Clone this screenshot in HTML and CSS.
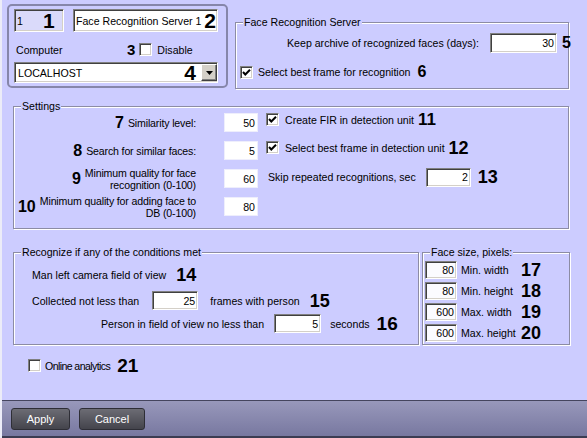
FILE: index.html
```html
<!DOCTYPE html>
<html>
<head>
<meta charset="utf-8">
<link rel="stylesheet" href="styles.css">
</head>
<body>
<div class="window">
  <div class="content">
    <div class="top">
      <div class="idpanel">
        <div class="idrow">
          <div class="field sunken f-id"><span>1</span><b class="num n21 id-num">1</b></div>
          <div class="field sunken f-name"><span>Face Recognition Server 1</span><b class="num n21">2</b></div>
        </div>
        <div class="comprow">
          <span class="comp">Computer</span>
          <span class="disable"><b class="num n15">3</b><span class="cb"></span><span>Disable</span></span>
        </div>
        <div class="combo sunken">
          <span>LOCALHOST</span>
          <b class="num n21 combo-num">4</b>
          <span class="drop"><svg width="7" height="4" viewBox="0 0 7 4"><path d="M0 0H7L3.5 4Z" fill="#000"/></svg></span>
        </div>
      </div>
      <div class="group g-server">
        <span class="legend">Face Recognition Server</span>
        <div class="keeprow">
          <span>Keep archive of recognized faces (days):</span>
          <div class="field sunken f-30">30</div>
          <b class="num n16 over">5</b>
        </div>
        <div class="cbrow">
          <span class="cb checked"><svg viewBox="0 0 11 11"><polyline points="2,5 4.3,7.5 9,2.8" fill="none" stroke="#000" stroke-width="2"/></svg></span>
          <span>Select best frame for recognition</span>
          <b class="num n16">6</b>
        </div>
      </div>
    </div>

    <div class="group g-settings">
      <span class="legend">Settings</span>
      <div class="sgrid">
        <div class="lab"><b class="num n16">7</b><span>Similarity level:</span></div>
        <div class="inp"><div class="field flat">50</div></div>
        <div class="rc"><span class="cb checked"><svg viewBox="0 0 11 11"><polyline points="2,5 4.3,7.5 9,2.8" fill="none" stroke="#000" stroke-width="2"/></svg></span><span>Create FIR in detection unit</span><b class="num n17">11</b></div>

        <div class="lab"><b class="num n16">8</b><span>Search for similar faces:</span></div>
        <div class="inp"><div class="field flat">5</div></div>
        <div class="rc"><span class="cb checked"><svg viewBox="0 0 11 11"><polyline points="2,5 4.3,7.5 9,2.8" fill="none" stroke="#000" stroke-width="2"/></svg></span><span>Select best frame in detection unit</span><b class="num n18">12</b></div>

        <div class="lab"><b class="num n16">9</b><span>Minimum quality for face<br>recognition (0-100)</span></div>
        <div class="inp"><div class="field flat">60</div></div>
        <div class="skip"><span>Skip repeated recognitions, sec</span><div class="field sunken f-skip">2</div><b class="num n18">13</b></div>

        <div class="lab"><b class="num n16">10</b><span>Minimum quality for adding face to<br>DB (0-100)</span></div>
        <div class="inp"><div class="field flat">80</div></div>
        <div></div>
      </div>
    </div>

    <div class="brow">
      <div class="group g-recog">
        <span class="legend">Recognize if any of the conditions met</span>
        <div class="rrow r1"><span>Man left camera field of view</span><b class="num n18">14</b></div>
        <div class="rrow r2"><span>Collected not less than</span><div class="field sunken f-25">25</div><span>frames with person</span><b class="num n18">15</b></div>
        <div class="rrow r3"><span>Person in field of view no less than</span><div class="field sunken f-5">5</div><span>seconds</span><b class="num n19">16</b></div>
      </div>
      <div class="group g-face">
        <span class="legend">Face size, pixels:</span>
        <div class="frow"><div class="field sunken f-face">80</div><span class="flab">Min. width</span><b class="num n18">17</b></div>
        <div class="frow"><div class="field sunken f-face">80</div><span class="flab">Min. height</span><b class="num n18">18</b></div>
        <div class="frow"><div class="field sunken f-face">600</div><span class="flab">Max. width</span><b class="num n18">19</b></div>
        <div class="frow"><div class="field sunken f-face">600</div><span class="flab">Max. height</span><b class="num n18">20</b></div>
      </div>
    </div>

    <div class="online"><span class="cb"></span><span class="otext">Online analytics</span><b class="num n19">21</b></div>
  </div>
  <div class="footer">
    <button class="btn b-apply">Apply</button>
    <button class="btn b-cancel">Cancel</button>
  </div>
</div>
</body>
</html>
```

FILE: styles.css
```css
* { box-sizing: border-box; margin: 0; padding: 0; }
html, body { width: 587px; height: 438px; overflow: hidden; }
body {
  background: #ccccff;
  font-family: "Liberation Sans", Arial, sans-serif;
  font-size: 10.6px;
  color: #000;
}
.window {
  width: 587px;
  height: 438px;
  border-left: 2px solid #ececf8;
  display: flex;
  flex-direction: column;
}
.content { height: 400px; padding-left: 11px; }

.num {
  font-weight: bold;
  font-size: 17px;
  line-height: 1;
  white-space: nowrap;
  letter-spacing: 0;
}
.n15 { font-size: 15px; }
.n16 { font-size: 16px; }
.n17 { font-size: 17px; }
.n18 { font-size: 18px; }
.n19 { font-size: 19px; }
.n21 { font-size: 21px; }

/* fields */
.field {
  display: flex;
  align-items: center;
  justify-content: flex-end;
  padding: 0 2px;
  background: #fff;
  white-space: nowrap;
}
.sunken {
  border: 1px solid;
  border-color: #808080 #ffffff #ffffff #808080;
  box-shadow: inset 1px 1px 0 #404040, inset -1px -1px 0 #d4d0c8;
}
.flat {
  border: 1px solid #eeeefc;
  width: 34px;
  height: 19px;
}

/* checkbox */
.cb {
  display: inline-block;
  width: 13px;
  height: 13px;
  flex: none;
  background: #fff;
  border: 1px solid;
  border-color: #808080 #ffffff #ffffff #808080;
  box-shadow: inset 1px 1px 0 #404040, inset -1px -1px 0 #d4d0c8;
}
.cb svg { display: block; width: 11px; height: 11px; }

/* groups */
.group {
  position: relative;
  border: 1px solid #8c8ca4;
  box-shadow: 1px 1px 0 #ffffff, inset 1px 1px 0 #ffffff;
}
.legend {
  position: absolute;
  top: -7px;
  left: 7px;
  padding: 0 1px;
  background: #ccccff;
  line-height: 13px;
  white-space: nowrap;
}

/* top */
.top {
  display: flex;
  align-items: flex-start;
  padding-top: 4px;
  margin-left: -6px;
}
.idpanel {
  width: 221px;
  height: 84px;
  border: 2px solid #8686aa;
  border-radius: 5px;
  padding: 3px 0 0 5px;
}
.idrow { display: flex; gap: 9px; }
.f-id {
  width: 50px;
  height: 23px;
  justify-content: flex-start;
  background: #dadafa;
}
.id-num { margin-left: 20px; }
.f-name {
  width: 145px;
  height: 23px;
  justify-content: space-between;
  padding-right: 1px;
}
.comprow {
  display: grid;
  grid-template-columns: 113px auto;
  align-items: center;
  height: 21px;
  margin-top: 7px;
}
.comp { padding-left: 2px; }
.disable { display: flex; align-items: center; }
.disable .cb { margin-left: 4px; margin-right: 5px; }
.combo {
  display: flex;
  align-items: center;
  width: 204px;
  height: 21px;
  margin-top: 2px;
  padding-left: 3px;
  background: #fff;
}
.combo-num { margin-left: auto; margin-right: 5px; }
.drop {
  width: 16px;
  height: 17px;
  display: flex;
  align-items: center;
  justify-content: center;
  background: #d4d0c8;
  border: 1px solid;
  border-color: #ffffff #404040 #404040 #ffffff;
  box-shadow: inset -1px -1px 0 #808080;
}

.g-server {
  width: 334px;
  height: 67px;
  margin-left: 7px;
  margin-top: 18px;
}
.keeprow {
  display: flex;
  justify-content: flex-end;
  align-items: center;
  height: 20px;
  margin-top: 10px;
  padding-right: 6px;
}
.f-30 { width: 67px; height: 20px; margin-left: 11px; }
.over { width: 0; margin-left: 5px; overflow: visible; }
.cbrow {
  display: flex;
  align-items: center;
  margin-top: 11px;
  padding-left: 4px;
}
.cbrow .cb { margin-right: 5px; }
.cbrow .num { margin-left: 7px; }

/* settings */
.g-settings {
  width: 556px;
  height: 123px;
  margin-top: 17px;
}
.sgrid {
  display: grid;
  grid-template-columns: 182px 62px auto;
  grid-auto-rows: 19px;
  row-gap: 9px;
  padding-top: 6px;
}
.lab {
  display: flex;
  justify-content: flex-end;
  align-items: center;
  text-align: right;
  line-height: 12px;
  white-space: nowrap;
  letter-spacing: -0.15px;
}
.lab .num { margin-right: 4px; }
.inp { padding-left: 28px; }
.rc {
  align-self: start;
  display: flex;
  align-items: center;
  height: 13px;
  padding-left: 8px;
}
.rc .cb { margin-right: 6px; }
.rc .num { margin-left: 4px; }
.skip {
  display: flex;
  align-items: center;
  padding-left: 10px;
  margin-top: -3px;
}
.f-skip { width: 45px; height: 19px; margin-left: 10px; }
.skip .num { margin-left: 7px; }

/* bottom row */
.brow {
  display: flex;
  gap: 3px;
  margin-top: 23px;
}
.g-recog {
  width: 406px;
  height: 93px;
  padding-top: 12px;
  padding-left: 18px;
}
.rrow { display: flex; align-items: center; height: 19px; }
.r1 .num { margin-left: 10px; }
.r2 { margin-top: 7px; }
.f-25 { width: 46px; height: 19px; margin: 0 12px 0 13px; }
.r2 .num { margin-left: 10px; }
.r3 { margin-top: 4px; padding-left: 69px; }
.f-5 { width: 47px; height: 19px; margin: 0 9px 0 10px; }
.r3 .num { margin-left: 7px; }

.g-face {
  width: 148px;
  height: 93px;
  padding-top: 8px;
  padding-left: 2px;
  display: flex;
  flex-direction: column;
  gap: 3px;
}
.frow { display: flex; align-items: center; height: 18px; }
.f-face { width: 32px; height: 18px; background: #fbfbff; }
.flab { width: 64px; padding-left: 4px; }

.online {
  display: flex;
  align-items: center;
  margin-top: 11px;
  padding-left: 15px;
}
.online .cb { margin-right: 4px; }
.otext { letter-spacing: -0.6px; }
.online .num { margin-left: 7px; }

/* footer */
.footer {
  height: 38px;
  border-top: 1px solid #45455e;
  border-bottom: 2px solid #3c3c52;
  background: linear-gradient(#9898bb, #7878a0);
  display: flex;
  gap: 9px;
  padding: 7px 0 0 9px;
}
.btn {
  height: 22px;
  border: 1px solid #2e2e36;
  border-radius: 3px;
  background: linear-gradient(#6c6c74, #44444c);
  color: #fff;
  font-family: "Liberation Sans", Arial, sans-serif;
  font-size: 11px;
}
.b-apply { width: 59px; }
.b-cancel { width: 66px; }
```
